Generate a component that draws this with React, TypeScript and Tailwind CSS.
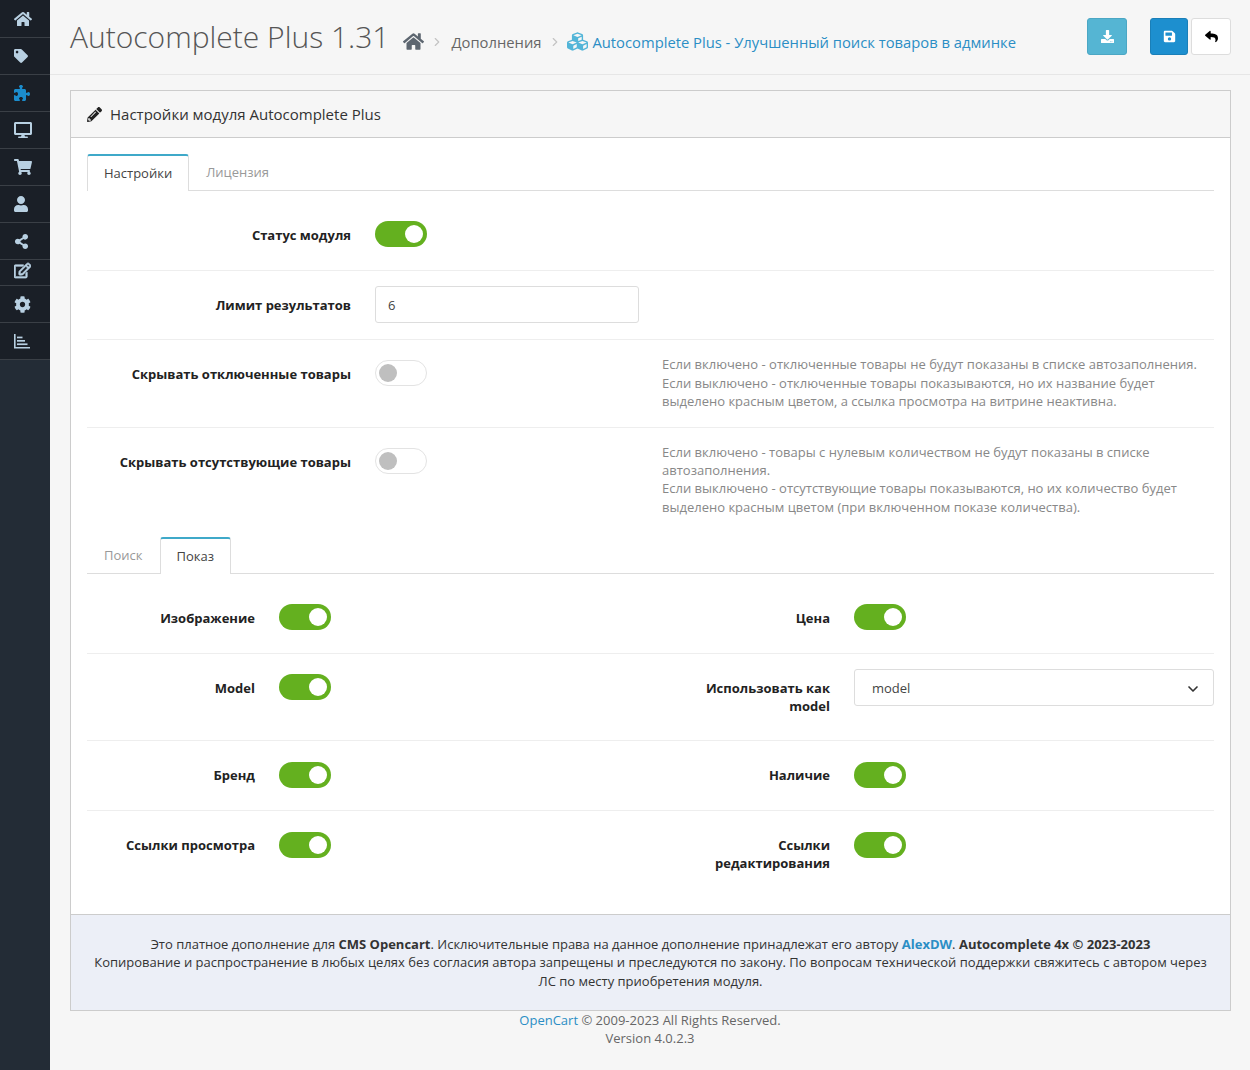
import { FC, ReactNode } from "react";
import {
  FaCog,
  FaCubes,
  FaDesktop,
  FaDownload,
  FaHome,
  FaPencilAlt,
  FaRegEdit,
  FaReply,
  FaSave,
  FaShareAlt,
  FaShoppingCart,
  FaTag,
  FaUser,
} from "react-icons/fa";
import { FaPuzzlePiece } from "react-icons/fa6";
import { ChevronDown, ChevronRight } from "lucide-react";

const Toggle: FC<{ on?: boolean }> = ({ on }) => (
  <div
    className={
      on
        ? "flex h-[26px] w-[52px] items-center justify-end rounded-full bg-[#64b01f] pr-1"
        : "flex h-[26px] w-[52px] items-center rounded-full border border-[#e3e3e3] bg-white pl-[3px]"
    }
  >
    <div
      className={
        on
          ? "size-[18px] rounded-full bg-white"
          : "size-[18px] rounded-full bg-[#bfbfbf]"
      }
    />
  </div>
);

const Label: FC<{ children: ReactNode }> = ({ children }) => (
  <div className="text-right text-[13px] leading-[18px] font-bold text-[#222]">
    {children}
  </div>
);

const Tab: FC<{ active?: boolean; children: ReactNode }> = ({ active, children }) =>
  active ? (
    <div className="relative top-px -mt-px flex h-[37px] items-center rounded-t-[3px] border-x border-t-2 border-x-[#ddd] border-t-[#3fa9c9] bg-white px-4 text-[13px] text-[#444]">
      {children}
    </div>
  ) : (
    <div className="flex h-9 items-center px-[17px] pt-[2px] text-[13px] text-[#999]">{children}</div>
  );

const ChartIcon: FC = () => (
  <svg width="16" height="15" viewBox="0 0 16 15" fill="currentColor">
    <path d="M0 0h1.6v13H16v1.6H0z" />
    <rect x="3" y="2.6" width="5.5" height="1.7" />
    <rect x="3" y="6" width="8" height="1.7" />
    <rect x="3" y="9.4" width="10.5" height="1.7" />
  </svg>
);

const sideItems = [
  { icon: <FaHome />, box: "h-[38px] pr-1" },
  { icon: <FaTag className="text-[14px]" />, box: "h-[37px] pr-2" },
  { icon: <FaPuzzlePiece className="text-[16px] text-[#1b8ccc]" />, box: "h-[37px] pr-[6px]" },
  { icon: <FaDesktop />, box: "h-[37px] pr-1" },
  { icon: <FaShoppingCart />, box: "h-[37px] pr-1" },
  { icon: <FaUser className="text-[16px]" />, box: "h-[37px] pr-2" },
  { icon: <FaShareAlt className="text-[15px]" />, box: "h-[37px] pr-2" },
  { icon: <FaRegEdit className="text-[17px]" stroke="currentColor" strokeWidth={24} />, box: "h-[26px] pr-[6px] pb-1" },
  { icon: <FaCog className="text-[17px]" />, box: "h-[37px] pr-[6px]" },
  { icon: <ChartIcon />, box: "h-[37px] pr-[6px]" },
];

const Sidebar: FC = () => (
  <aside className="w-[50px] shrink-0 bg-[#232c36]">
    <div className="bg-[#1a1f27]">
      {sideItems.map((item, i) => (
        <div
          key={i}
          className={`${item.box} flex items-center justify-center border-b border-[#3a3f46] text-[18px] text-[#b8d0e2]`}
        >
          {item.icon}
        </div>
      ))}
    </div>
  </aside>
);

const Header: FC = () => (
  <header className="flex h-[75px] items-center border-b border-[#e6e6e6] pr-[19px] pl-5">
    <h1 className="text-[30px] leading-none font-light text-[#555]">Autocomplete Plus 1.31</h1>
    <nav className="ml-[14px] flex items-center pt-[10px] text-[14.77px] text-[#666]">
      <FaHome className="text-[21px] text-[#5d6670]" />
      <ChevronRight className="mr-[7px] ml-[6px] size-[14px] text-[#c4c4c4]" />
      <span>Дополнения</span>
      <ChevronRight className="mr-[5px] ml-[7px] size-[14px] text-[#c4c4c4]" />
      <FaCubes className="mr-[4px] text-[21px] text-[#52b5d8]" />
      <span className="text-[#2b8ec5]">Autocomplete Plus - Улучшенный поиск товаров в админке</span>
    </nav>
    <div className="mb-px ml-auto flex items-center">
      <button className="mr-[23px] flex h-[37px] w-10 items-center justify-center rounded-[3px] border border-[#4ba7c4] bg-[#55b5d3] text-[13px] text-white">
        <FaDownload />
      </button>
      <button className="mr-[3px] flex h-[37px] w-[38px] items-center justify-center rounded-[3px] border border-[#1a7fb8] bg-[#1d8fcf] text-[13px] text-white">
        <FaSave />
      </button>
      <button className="flex h-[37px] w-10 items-center justify-center rounded-[3px] border border-[#ddd] bg-white text-[13px] text-black">
        <FaReply />
      </button>
    </div>
  </header>
);

const helpClass = "text-[13px] leading-[18.2px] text-[#888]";
const settingsRow = "grid grid-cols-[264px_263px_1fr] gap-x-6 border-b border-[#eee]";
const displayRow = "grid grid-cols-[168px_359px_168px_360px] items-start gap-x-6 px-0";

const SettingsTab: FC = () => (
  <>
    <div className={`${settingsRow} h-[80px] pt-[30px]`}>
      <div className="pt-[5px]">
        <Label>Статус модуля</Label>
      </div>
      <Toggle on />
    </div>
    <div className={`${settingsRow} h-[69px] pt-[15px]`}>
      <div className="pt-[10px]">
        <Label>Лимит результатов</Label>
      </div>
      <div className="flex h-[37px] w-[264px] items-center rounded-[3px] border border-[#ddd] bg-white pt-[2px] pl-3 text-[13px] text-[#444]">
        6
      </div>
    </div>
    <div className={`${settingsRow} h-[88px] pt-[15px]`}>
      <div className="pt-[10px]">
        <Label>Скрывать отключенные товары</Label>
      </div>
      <div className="pt-[5px]">
        <Toggle />
      </div>
      <p className={`${helpClass} mt-[0.4px]`}>
        Если включено - отключенные товары не будут показаны в списке автозаполнения.
        <br />
        Если выключено - отключенные товары показываются, но их название будет выделено красным цветом, а ссылка просмотра на витрине неактивна.
      </p>
    </div>
    <div className="grid h-[109px] grid-cols-[264px_263px_1fr] gap-x-6 pt-[15px]">
      <div className="pt-[10px]">
        <Label>Скрывать отсутствующие товары</Label>
      </div>
      <div className="pt-[5px]">
        <Toggle />
      </div>
      <p className={helpClass}>
        Если включено - товары с нулевым количеством не будут показаны в списке автозаполнения.
        <br />
        Если выключено - отсутствующие товары показываются, но их количество будет выделено красным цветом (при включенном показе количества).
      </p>
    </div>
  </>
);

const DisplayTab: FC = () => (
  <>
    <div className="flex border-b border-[#ddd]">
      <Tab>Поиск</Tab>
      <Tab active>Показ</Tab>
    </div>
    <div className={`${displayRow} h-[80px] border-b border-[#eee] pt-[30px]`}>
      <div className="pt-[5px]">
        <Label>Изображение</Label>
      </div>
      <Toggle on />
      <div className="pt-[5px]">
        <Label>Цена</Label>
      </div>
      <Toggle on />
    </div>
    <div className={`${displayRow} h-[87px] border-b border-[#eee] pt-[15px]`}>
      <div className="pt-[10px]">
        <Label>Model</Label>
      </div>
      <div className="pt-[5px]">
        <Toggle on />
      </div>
      <div className="pt-[10px]">
        <Label>
          Использовать как
          <br />
          model
        </Label>
      </div>
      <div className="flex h-[37px] items-center justify-between rounded-[3px] border border-[#ddd] bg-white pt-[2px] pr-3 pl-[17px] text-[13px] text-[#444]">
        model
        <ChevronDown className="size-4 text-[#333]" strokeWidth={2.5} />
      </div>
    </div>
    <div className={`${displayRow} h-[70px] border-b border-[#eee] pt-[21px]`}>
      <div className="pt-1">
        <Label>Бренд</Label>
      </div>
      <Toggle on />
      <div className="pt-1">
        <Label>Наличие</Label>
      </div>
      <Toggle on />
    </div>
    <div className={`${displayRow} h-[103px] pt-[21px]`}>
      <div className="pt-1">
        <Label>Ссылки просмотра</Label>
      </div>
      <Toggle on />
      <div className="pt-1">
        <Label>
          Ссылки
          <br />
          редактирования
        </Label>
      </div>
      <Toggle on />
    </div>
  </>
);

const App: FC = () => (
  <div className="flex min-h-[1070px] bg-[#f6f6f6] font-['Open_Sans',sans-serif]">
    <Sidebar />
    <main className="min-w-0 flex-1">
      <Header />
      <section className="mx-5 mt-[15px] mr-[19px] border border-[#ccc]">
        <div className="flex h-[47px] items-center gap-2 border-b border-[#ccc] pl-4 text-[15px] text-[#333]">
          <FaPencilAlt className="text-[15px] text-[#222]" />
          Настройки модуля Autocomplete Plus
        </div>
        <div className="bg-white px-4 pt-4">
          <div className="flex border-b border-[#ddd]">
            <Tab active>Настройки</Tab>
            <Tab>Лицензия</Tab>
          </div>
          <SettingsTab />
          <DisplayTab />
        </div>
        <div className="border-t border-[#ccc] bg-[#eceff7] px-4 pt-[20px] pb-[20px] text-center text-[13px] leading-[18.4px] text-[#333]">
          Это платное дополнение для <b>CMS Opencart</b>. Исключительные права на данное дополнение принадлежат его автору{" "}
          <b className="text-[#2b8ec5]">AlexDW</b>. <b>Autocomplete 4x © 2023-2023</b>
          <br />
          Копирование и распространение в любых целях без согласия автора запрещены и преследуются по закону. По вопросам технической поддержки свяжитесь с автором через ЛС по месту приобретения модуля.
        </div>
      </section>
      <footer className="text-center text-[13px] leading-[18px] text-[#666]">
        <span className="text-[#2b8ec5]">OpenCart</span> © 2009-2023 All Rights Reserved.
        <br />
        Version 4.0.2.3
      </footer>
    </main>
  </div>
);

export default App;
